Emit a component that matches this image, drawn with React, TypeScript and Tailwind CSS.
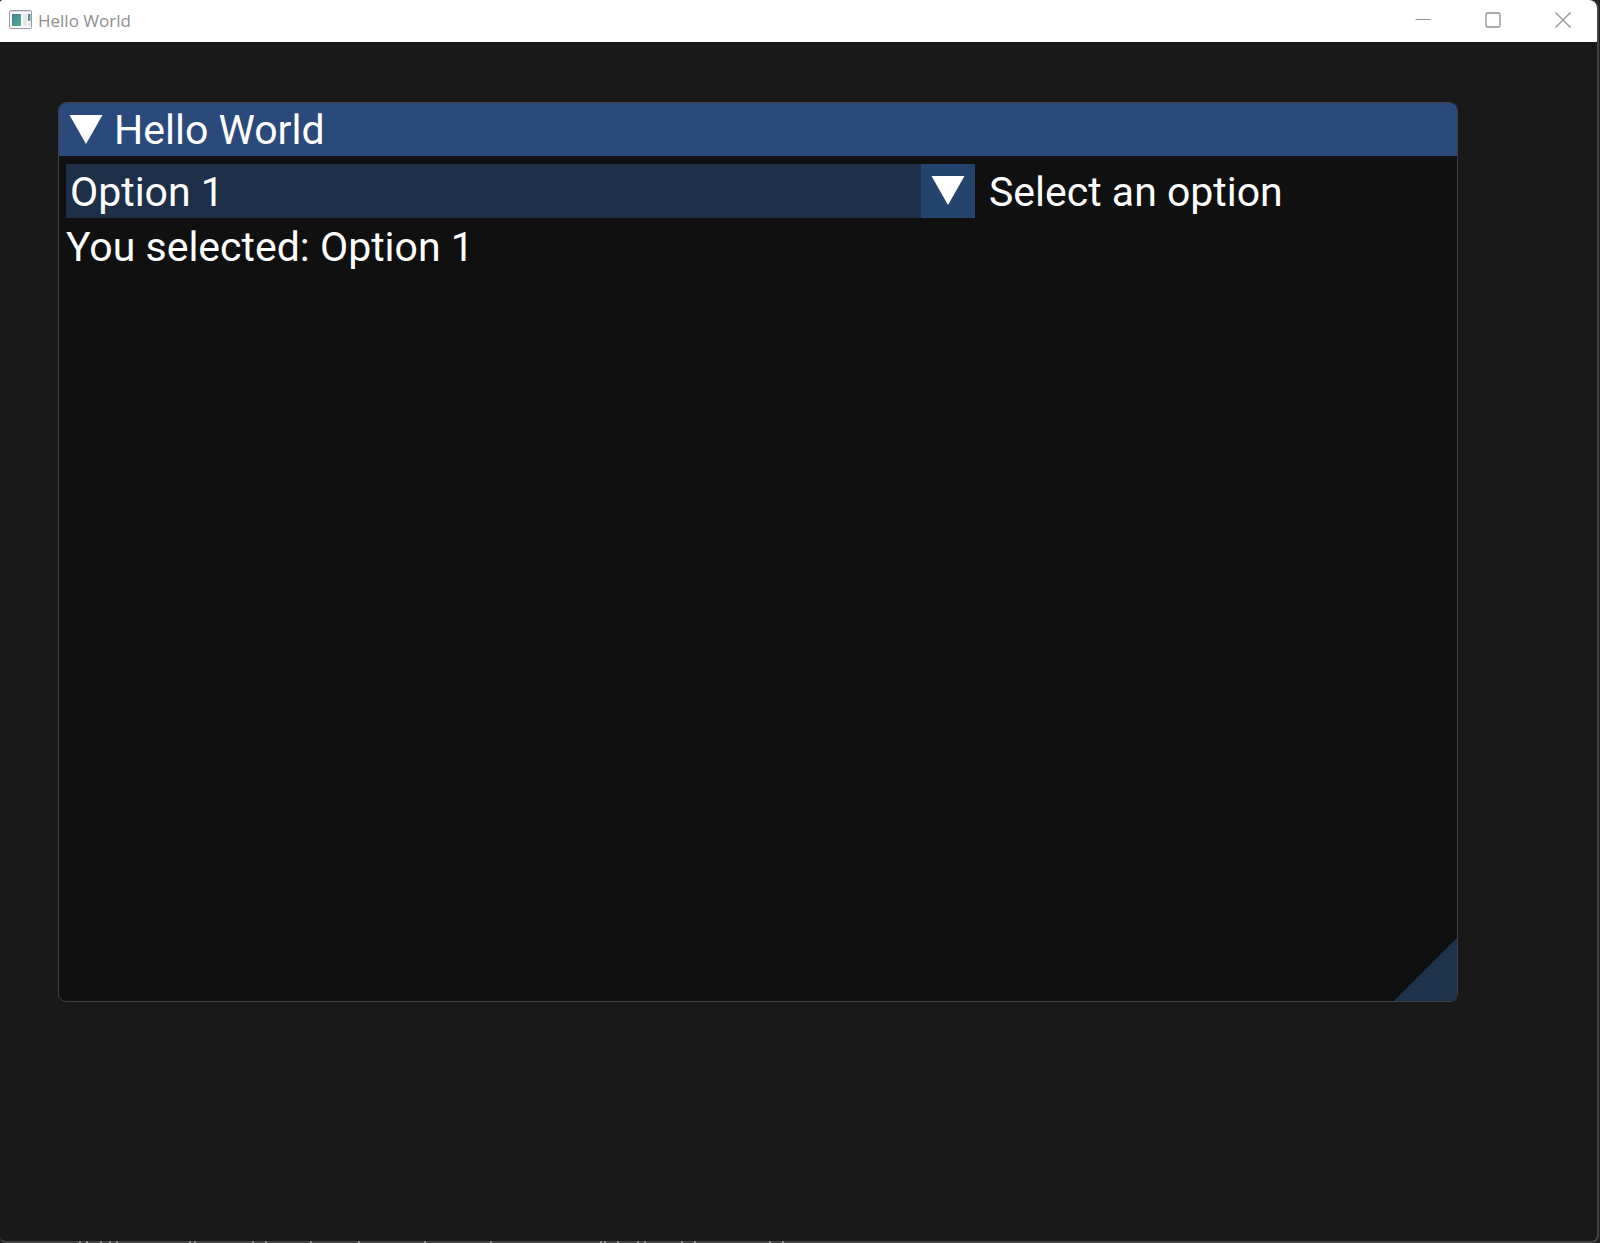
import { useState } from "react";

const options = ["Option 1", "Option 2", "Option 3"];

function AppIcon() {
  return (
    <svg width="24" height="20" viewBox="0 0 24 20" aria-hidden="true">
      <defs>
        <linearGradient id="pane" x1="0" y1="0" x2="1" y2="1">
          <stop offset="0" stopColor="#4a7fa5" />
          <stop offset="1" stopColor="#4fae82" />
        </linearGradient>
      </defs>
      <rect x="0.5" y="0.5" width="22" height="18" rx="1" fill="#f8f8fa" stroke="#9a9aa0" />
      <path d="M1 1.5h21" stroke="#dcdce2" />
      <rect x="3" y="4" width="9" height="12" fill="url(#pane)" />
      <rect x="14" y="4" width="4" height="12" fill="#e6e6ec" />
      <rect x="19" y="4" width="2.5" height="7" fill="url(#pane)" />
      <rect x="19" y="12" width="2.5" height="4" fill="#e6e6ec" />
    </svg>
  );
}

function DownTriangle() {
  return (
    <svg width="34" height="30" viewBox="0 0 34 30" aria-hidden="true">
      <path d="M0.5 0H33.5L17 29Z" fill="#fff" />
    </svg>
  );
}

const captionButton = "flex h-9 w-[68px] items-center justify-center text-[#8f8f8f]";

function CaptionBar() {
  return (
    <header className="flex h-[42px] shrink-0 items-center gap-0.5 rounded-tr-lg rounded-tl-[3px] bg-white pb-[3px] pl-[9px]">
      <AppIcon />
      <span className="ml-[3px] flex-1 pt-0.5 font-['Open_Sans',sans-serif] text-[17px] leading-6 text-[#8f8f8f]">
        Hello World
      </span>
      <button type="button" aria-label="Minimize" className={captionButton}>
        <svg width="16" height="16" viewBox="0 0 16 16" fill="none" stroke="currentColor">
          <path d="M0.5 7.5h15" />
        </svg>
      </button>
      <button type="button" aria-label="Maximize" className={captionButton}>
        <svg width="16" height="16" viewBox="0 0 16 16" fill="none" stroke="currentColor">
          <rect x="1" y="1" width="14" height="14" rx="1.5" strokeWidth="1.3" />
        </svg>
      </button>
      <button type="button" aria-label="Close" className={captionButton}>
        <svg width="16" height="16" viewBox="0 0 16 16" fill="none" stroke="currentColor">
          <path d="M0.5 0.5l15 15M15.5 0.5l-15 15" strokeWidth="1.2" />
        </svg>
      </button>
    </header>
  );
}

/* Light specks that show along the window's bottom edge. */
const specks = [
  79, 86, 100, 109, 116, 189, 194, 252, 265, 310, 358, 424, 490, 600, 604, 617, 637, 644, 681, 694, 769, 782,
];

function EdgeSpecks() {
  return (
    <svg className="absolute bottom-0 left-0" width="800" height="2" viewBox="0 0 800 2" aria-hidden="true">
      {specks.map((x) => (
        <rect key={x} x={x} y="0" width="2" height="2" fill="#8c8c8c" />
      ))}
    </svg>
  );
}

export default function App() {
  const [selected, setSelected] = useState(options[0]);

  return (
    <div className="relative flex min-h-screen bg-[#202020] pr-px font-[Roboto,sans-serif] text-[41px] leading-[46px] text-white">
      <div className="flex flex-1 flex-col rounded-r-lg rounded-bl-md border-r-2 border-b-2 border-[#434343] bg-[#191919]">
        <CaptionBar />
        <main className="flex flex-1 pt-[60px] pr-[139px] pb-[239px] pl-[58px]">
          <section className="relative flex flex-1 flex-col overflow-hidden rounded-lg border border-[#3f3f47] bg-[#101010]">
            <div className="flex h-[53px] items-center bg-[#294a7a] pl-[10px]">
              <button type="button" aria-label="Collapse" className="mr-[11px]">
                <DownTriangle />
              </button>
              <h1>Hello World</h1>
            </div>
            <div className="px-[7px] pt-2">
              <div className="grid grid-cols-[909fr_475fr] items-center">
                <div className="grid">
                  <select
                    id="option"
                    value={selected}
                    onChange={(e) => setSelected(e.target.value)}
                    className="col-start-1 row-start-1 h-[54px] appearance-none bg-[#1d2f49] pt-px pl-1 outline-none"
                  >
                    {options.map((o) => (
                      <option key={o}>{o}</option>
                    ))}
                  </select>
                  <span className="pointer-events-none col-start-1 row-start-1 flex h-[54px] w-[54px] items-center justify-center justify-self-end bg-[#23456d]">
                    <DownTriangle />
                  </span>
                </div>
                <label htmlFor="option" className="pt-px pl-[14px]">
                  Select an option
                </label>
              </div>
              <p className="pt-1.5">You selected: {selected}</p>
            </div>
            <svg className="absolute right-0 bottom-0" width="63" height="63" viewBox="0 0 63 63" aria-hidden="true">
              <path d="M63 0V63H0Z" fill="#1d324b" />
            </svg>
          </section>
        </main>
      </div>
      <EdgeSpecks />
    </div>
  );
}
